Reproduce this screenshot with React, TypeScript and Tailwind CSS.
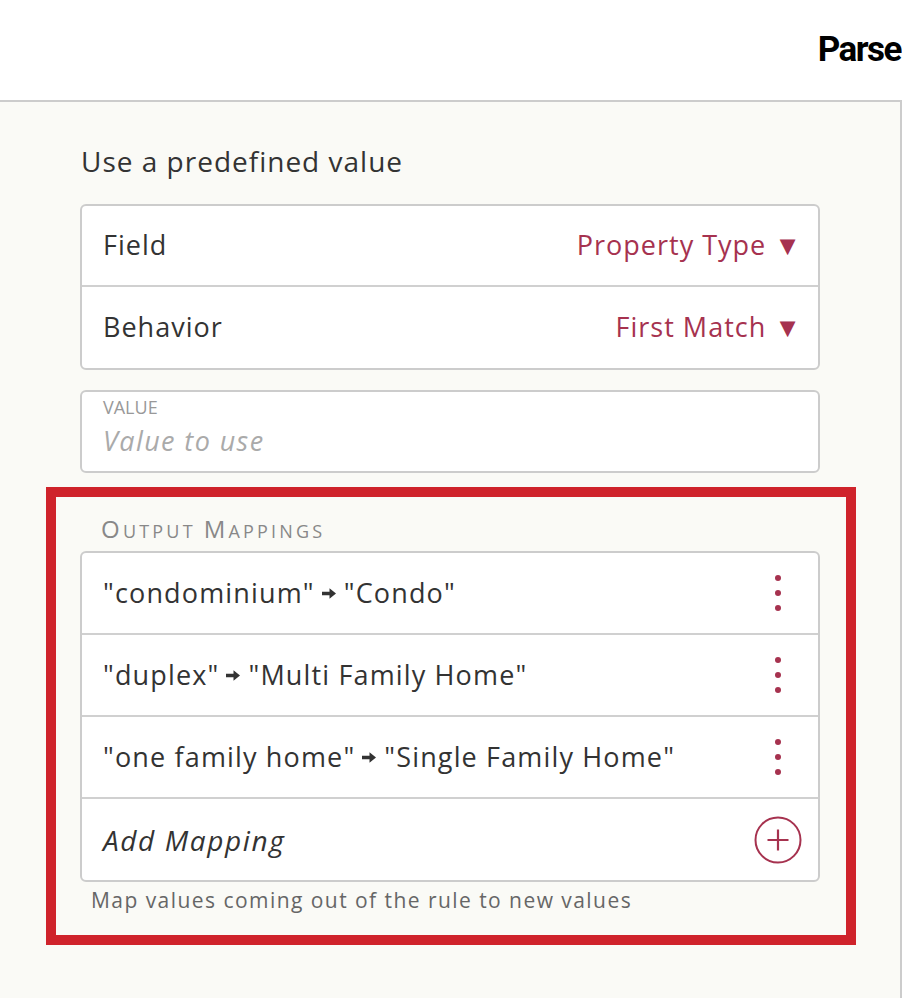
import React from "react";

const font = { fontFamily: "'Open Sans', Lato, sans-serif" };

function Arrow() {
  return (
    <svg width="16" height="13" viewBox="0 0 16 13" className="ml-[6px] mr-[7px] inline-block">
      <path d="M1 4.8h7.5V1.2l6.5 5.3-6.5 5.3V8.2H1z" fill="#333" />
    </svg>
  );
}

function Kebab() {
  return (
    <div className="flex flex-col gap-[9px]">
      <span className="block h-[6px] w-[6px] rounded-full bg-[#a6324f]" />
      <span className="block h-[6px] w-[6px] rounded-full bg-[#a6324f]" />
      <span className="block h-[6px] w-[6px] rounded-full bg-[#a6324f]" />
    </div>
  );
}

function MapRow({ from, to }: { from: string; to: string }) {
  return (
    <div className="flex h-[82px] items-center justify-between border-b-2 border-[#d0d0d0] pl-[21px] pr-[37px]">
      <span className="flex items-center text-[27px] tracking-[1.15px] text-[#333]">
        "{from}"<Arrow />"{to}"
      </span>
      <Kebab />
    </div>
  );
}

export default function App() {
  return (
    <div className="h-[998px] w-[902px] overflow-hidden bg-white" style={font}>
      <div className="flex h-[100px] items-center justify-end pr-[1px]">
        <span
          className="whitespace-nowrap text-[35px] font-bold tracking-[-1.5px] text-black"
          style={{ fontFamily: "Roboto, sans-serif" }}
        >
          Parse
        </span>
      </div>
      <div className="h-[898px] border-r-2 border-t-2 border-[#cccccc] bg-[#fafaf6] pt-[42px]">
        <div className="pl-[81px] text-[28px] leading-[34px] tracking-[1px] text-[#333]">Use a predefined value</div>
        <div className="ml-[80px] mt-[26px] w-[740px] rounded-[6px] border-2 border-[#cccccc] bg-white">
          <div className="flex h-[81px] items-center justify-between border-b-2 border-[#d0d0d0] pl-[21px] pr-[16px] text-[27px] tracking-[1px]">
            <span className="text-[#333]">Field</span>
            <span className="text-[#a6324f]">Property Type ▼</span>
          </div>
          <div className="flex h-[81px] items-center justify-between pl-[21px] pr-[16px] text-[27px] tracking-[1px]">
            <span className="text-[#333]">Behavior</span>
            <span className="text-[#a6324f]">First Match ▼</span>
          </div>
        </div>
        <div className="ml-[80px] mt-[20px] flex h-[83px] w-[740px] flex-col rounded-[6px] border-2 border-[#cccccc] bg-white pl-[21px] pt-[5px]">
          <span className="text-[18px] leading-[20px] text-[#999]">VALUE</span>
          <span className="mt-[7px] text-[27px] italic leading-[34px] tracking-[1.4px] text-[#aaa]">Value to use</span>
        </div>
        <div className="ml-[46px] mt-[14px] h-[458px] w-[810px] border-[10px] border-[#cf232b] pt-[18px]">
          <div className="pl-[45px] text-[#888] leading-[28px] tracking-[3.2px]">
            <span className="text-[24px]">O</span>
            <span className="text-[18px]">UTPUT </span>
            <span className="text-[24px]">M</span>
            <span className="text-[18px]">APPINGS</span>
          </div>
          <div className="ml-[24px] mt-[5px] w-[740px] rounded-[6px] border-2 border-[#cccccc] bg-white">
            <MapRow from="condominium" to="Condo" />
            <MapRow from="duplex" to="Multi Family Home" />
            <MapRow from="one family home" to="Single Family Home" />
            <div className="flex h-[81px] items-center justify-between pl-[21px] pr-[16px]">
              <span className="text-[28px] italic tracking-[1.6px] text-[#333]">Add Mapping</span>
              <svg width="48" height="48" viewBox="0 0 48 48">
                <circle cx="24" cy="24" r="22.5" fill="none" stroke="#a6324f" strokeWidth="2" />
                <path d="M24 13.5v21M13.5 24h21" stroke="#a6324f" strokeWidth="2.2" />
              </svg>
            </div>
          </div>
          <div className="mt-[4px] pl-[35px] text-[21px] leading-[28px] tracking-[1.45px] text-[#666]">
            Map values coming out of the rule to new values
          </div>
        </div>
      </div>
    </div>
  );
}
